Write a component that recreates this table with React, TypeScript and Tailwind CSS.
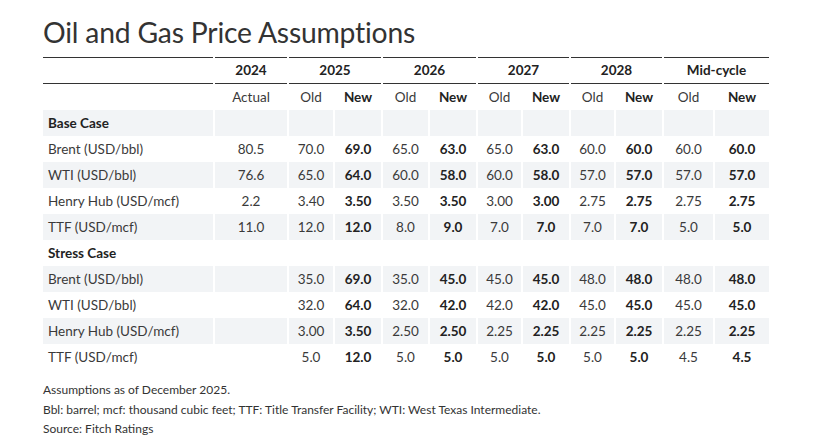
const years = ['2025', '2026', '2027', '2028', 'Mid-cycle'];

type Row = { label: string; actual: string; values: string[] };

const baseCase: Row[] = [
  { label: 'Brent (USD/bbl)', actual: '80.5', values: ['70.0', '69.0', '65.0', '63.0', '65.0', '63.0', '60.0', '60.0', '60.0', '60.0'] },
  { label: 'WTI (USD/bbl)', actual: '76.6', values: ['65.0', '64.0', '60.0', '58.0', '60.0', '58.0', '57.0', '57.0', '57.0', '57.0'] },
  { label: 'Henry Hub (USD/mcf)', actual: '2.2', values: ['3.40', '3.50', '3.50', '3.50', '3.00', '3.00', '2.75', '2.75', '2.75', '2.75'] },
  { label: 'TTF (USD/mcf)', actual: '11.0', values: ['12.0', '12.0', '8.0', '9.0', '7.0', '7.0', '7.0', '7.0', '5.0', '5.0'] },
];

const stressCase: Row[] = [
  { label: 'Brent (USD/bbl)', actual: '', values: ['35.0', '69.0', '35.0', '45.0', '45.0', '45.0', '48.0', '48.0', '48.0', '48.0'] },
  { label: 'WTI (USD/bbl)', actual: '', values: ['32.0', '64.0', '32.0', '42.0', '42.0', '42.0', '45.0', '45.0', '45.0', '45.0'] },
  { label: 'Henry Hub (USD/mcf)', actual: '', values: ['3.00', '3.50', '2.50', '2.50', '2.25', '2.25', '2.25', '2.25', '2.25', '2.25'] },
  { label: 'TTF (USD/mcf)', actual: '', values: ['5.0', '12.0', '5.0', '5.0', '5.0', '5.0', '5.0', '5.0', '4.5', '4.5'] },
];

const gridCols =
  'grid grid-cols-[170px_72px_44px_46px_45px_46px_43px_46px_43px_46px_49px_54px] gap-x-[2px]';

function Cell({ children, shaded, bold, left }: { children?: React.ReactNode; shaded: boolean; bold?: boolean; left?: boolean }) {
  return (
    <div
      className={`h-[26px] flex items-center ${left ? 'justify-start pl-[5px]' : 'justify-center'} ${
        shaded ? 'bg-[#f2f4f6]' : ''
      } ${bold ? 'font-bold text-[#222]' : 'text-[#3a3a3a]'}`}
    >
      {children}
    </div>
  );
}

function SectionRows({ title, rows, startShaded }: { title: string; rows: Row[]; startShaded: boolean }) {
  return (
    <>
      <Cell shaded={startShaded} bold left>
        {title}
      </Cell>
      {Array.from({ length: 11 }).map((_, i) => (
        <Cell key={i} shaded={startShaded} />
      ))}
      {rows.map((row, r) => {
        const shaded = r % 2 === 0 ? !startShaded : startShaded;
        return (
          <div key={row.label} className="contents">
            <Cell shaded={shaded} left>
              {row.label}
            </Cell>
            <Cell shaded={shaded}>{row.actual}</Cell>
            {row.values.map((v, i) => (
              <Cell key={i} shaded={shaded} bold={i % 2 === 1}>
                {v}
              </Cell>
            ))}
          </div>
        );
      })}
    </>
  );
}

export default function App() {
  return (
    <div className="w-[827px] h-[443px] bg-white font-['Lato',sans-serif] pl-[43px] pt-[13px]">
      <h1 className="text-[28.3px] leading-[38px] text-[#333] tracking-[-0.2px]">Oil and Gas Price Assumptions</h1>

      <div className={`${gridCols} mt-[6px] text-[13.5px]`}>
        <div className="border-t border-b border-[#333] h-[27px]" />
        <div className="border-t border-b border-[#333] h-[27px] flex items-center justify-center font-bold text-[#222]">
          2024
        </div>
        {years.map((y) => (
          <div
            key={y}
            className="col-span-2 border-t border-b border-[#333] h-[27px] flex items-center justify-center font-bold text-[#222]"
          >
            {y}
          </div>
        ))}

        <div className="h-[26px]" />
        <Cell shaded={false}>Actual</Cell>
        {years.map((y) => (
          <div key={y} className="contents">
            <Cell shaded={false}>Old</Cell>
            <Cell shaded={false} bold>
              New
            </Cell>
          </div>
        ))}

        <SectionRows title="Base Case" rows={baseCase} startShaded />
        <SectionRows title="Stress Case" rows={stressCase} startShaded={false} />
      </div>

      <div className="mt-[10px] text-[12px] leading-[19.5px] text-[#333]">
        <p>Assumptions as of December 2025.</p>
        <p>Bbl: barrel; mcf: thousand cubic feet; TTF: Title Transfer Facility; WTI: West Texas Intermediate.</p>
        <p>Source: Fitch Ratings</p>
      </div>
    </div>
  );
}
